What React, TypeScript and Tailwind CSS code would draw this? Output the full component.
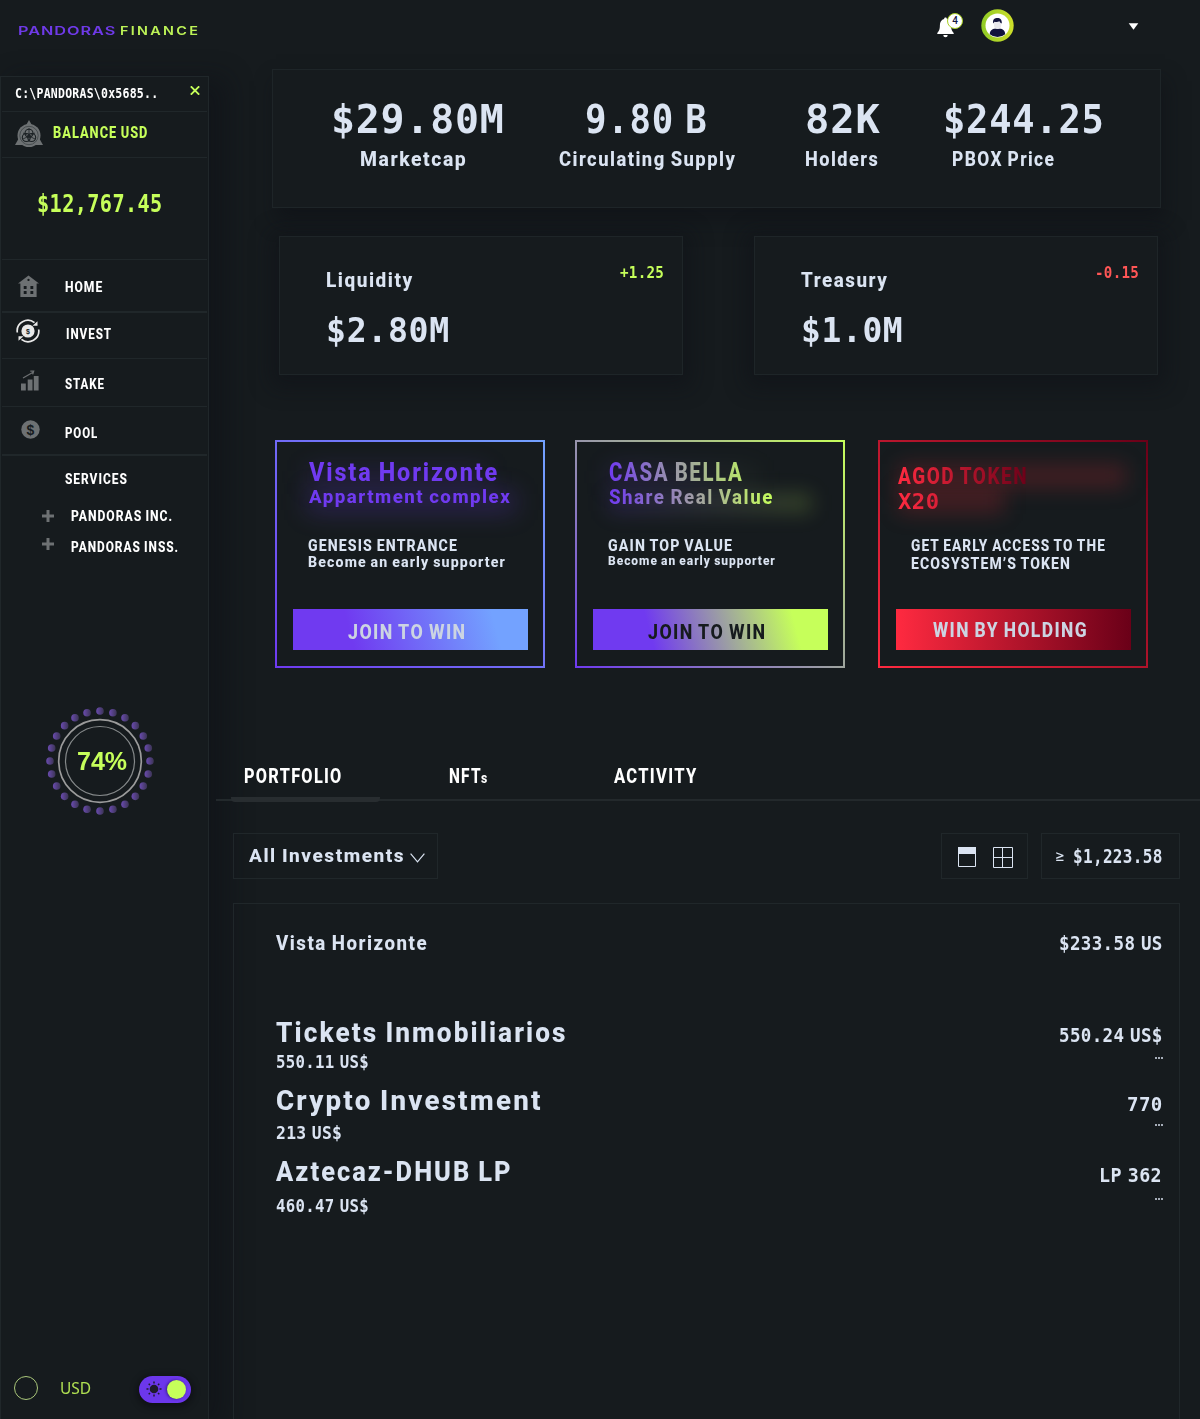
import React, { useLayoutEffect, useRef, useState } from 'react';

/** Condenses or widens one line of text so that it fills the width of its box. */
function Fit({ className = '', inner = '', children }: { className?: string; inner?: string; children: React.ReactNode }) {
  const box = useRef<HTMLSpanElement>(null);
  const line = useRef<HTMLSpanElement>(null);
  const [scale, setScale] = useState(1);
  useLayoutEffect(() => {
    if (!box.current || !line.current) return;
    const spacing = parseFloat(getComputedStyle(line.current).letterSpacing) || 0;
    setScale(box.current.clientWidth / (line.current.offsetWidth - spacing));
  }, []);
  return (
    <span ref={box} className={`block shrink-0 leading-none ${className}`}>
      <span ref={line} className={`inline-block origin-left whitespace-nowrap align-top ${inner}`} style={{ transform: `scaleX(${scale})` }}>
        {children}
      </span>
    </span>
  );
}

const SANS = "font-['Roboto',sans-serif] font-extrabold tracking-[0.08em] [word-spacing:-0.06em]";
const MONO = "font-['DejaVu_Sans_Mono',monospace] font-bold tracking-[0.02em] [word-spacing:-0.3em]";

function Label({ className = '', inner = '', children }: { className?: string; inner?: string; children: React.ReactNode }) {
  return <Fit className={`${SANS} ${className}`} inner={inner}>{children}</Fit>;
}

function Num({ className = '', inner = '', children }: { className?: string; inner?: string; children: React.ReactNode }) {
  return <Fit className={`${MONO} ${className}`} inner={inner}>{children}</Fit>;
}

function Emblem() {
  return (
    <svg className="mt-[8px] ml-[13px] h-[28px] w-[28px] shrink-0" viewBox="0 0 28 28" fill="none">
      <path d="M14 0L28 25H0Z" fill="#6d7173" />
      <circle cx="14" cy="15.500" r="11.500" fill="#6d7173" />
      <circle cx="14" cy="15.500" r="9.200" stroke="#3c4245" strokeWidth="0.800" />
      <circle cx="14" cy="13.200" r="4" stroke="#1a2023" strokeWidth="1.100" />
      <circle cx="11.300" cy="17.500" r="4" stroke="#1a2023" strokeWidth="1.100" />
      <circle cx="16.700" cy="17.500" r="4" stroke="#1a2023" strokeWidth="1.100" />
      <path d="M14 8v14M8 19l12-6M8 13l12 6" stroke="#1a2023" strokeWidth="0.800" />
    </svg>
  );
}

function HomeIcon() {
  return (
    <svg className="mt-[15px] ml-[16px] h-[22px] w-[21px] shrink-0" viewBox="0 0 22 22" preserveAspectRatio="none">
      <path fillRule="evenodd" fill="#6d7173" d="M11 0.500L22 8.500H19.500V22H2.500V8.500H0ZM11 3.700a1.200 1.200 0 1 0 .01 0ZM6 11v3h3v-3ZM13 11v3h3v-3ZM6 16v3h3v-3ZM13 16v3h3v-3Z" />
    </svg>
  );
}

function InvestIcon() {
  return (
    <svg className="mt-[6px] ml-[14px] h-[24px] w-[24px] shrink-0" viewBox="0 0 24 24" fill="none">
      <circle cx="12" cy="12" r="6.600" fill="#e9e9e9" />
      <path d="M1.300 13.500A10.700 10.700 0 0 1 18.500 3.600M22.700 10.500A10.700 10.700 0 0 1 5.500 20.400" stroke="#e9e9e9" strokeWidth="1.700" />
      <path d="M16.500 6.800h5V2.300ZM7.500 17.200H2.500V21.700Z" fill="#e9e9e9" />
      <text x="12" y="14.500" textAnchor="middle" fontSize="7" fontWeight="700" fontFamily="Liberation Sans" fill="#161b1e">$</text>
    </svg>
  );
}

function StakeIcon() {
  return (
    <svg className="mt-[11px] ml-[19px] h-[21px] w-[19px] shrink-0" viewBox="0 0 19 21">
      <path d="M0 13.500h4.800V20.500H0ZM6.700 9.500h4.800V20.500H6.700ZM12.800 6h4.800v14.500h-4.800Z" fill="#6d7173" />
      <path d="M2 8l10.500-6M9.300 1.200h3.400l-1 3.200" stroke="#6d7173" strokeWidth="1.200" fill="none" />
    </svg>
  );
}

function PoolIcon() {
  return (
    <svg className="mt-[13px] ml-[19px] h-[19px] w-[19px] shrink-0" viewBox="0 0 19 19">
      <circle cx="9.500" cy="9.500" r="9.200" fill="#6d7173" />
      <text x="9.500" y="14.500" textAnchor="middle" fontSize="14" fontFamily="Liberation Sans" fontWeight="700" fill="#161b1e">$</text>
    </svg>
  );
}

function Plus({ className }: { className: string }) {
  return (
    <svg className={`h-[12px] w-[12px] shrink-0 ${className}`} viewBox="0 0 12 12">
      <path d="M6 0v12M0 6h12" stroke="#6d7173" strokeWidth="3" />
    </svg>
  );
}

function Dial() {
  const dots = Array.from({ length: 24 }, (_, i) => (i * Math.PI) / 12);
  return (
    <div className="relative mt-[152px] ml-[45px] grid h-[108px] w-[108px] place-items-center">
      <svg className="absolute inset-0 h-[108px] w-[108px]" viewBox="-54 -54 108 108" fill="none">
        <defs>
          <linearGradient id="dot" x1="0" x2="1">
            <stop stopColor="#6a4bb0" />
            <stop offset="1" stopColor="#3b3454" />
          </linearGradient>
        </defs>
        {dots.map((a) => (
          <circle key={a} cx={50 * Math.sin(a)} cy={-50 * Math.cos(a)} r="3.800" fill="url(#dot)" />
        ))}
        <circle r="41.300" stroke="#9b9b9b" strokeWidth="1.700" />
        <circle r="34.500" stroke="#85898a" strokeWidth="1.200" />
      </svg>
      <Fit className="relative ml-[3px] w-[50px] font-['Liberation_Sans',sans-serif] text-[26px] font-bold text-[#c6ff5a]">74%</Fit>
    </div>
  );
}

function Sidebar() {
  const item = 'flex border-t border-[#20272a] mx-[1px]';
  return (
    <div className="flex h-[1343px] w-[209px] flex-col border border-b-0 border-[#20272a] text-white shadow-[14px_6px_24px_4px_rgba(14,15,22,0.45)]">
      <div className="flex h-[34px]">
        <Num className="mt-[9px] ml-[14px] w-[143px] text-[14px]">C:\PANDORAS\0x5685..</Num>
        <svg className="mt-[9px] ml-[32px] h-[9px] w-[10px]" viewBox="0 0 10 9"><path d="M.8.300L9.200 8.700M9.200.300L.8 8.700" stroke="#c6ff5a" strokeWidth="1.800" /></svg>
      </div>
      <div className={`${item} h-[46px]`}>
        <Emblem />
        <Label className="mt-[13px] ml-[10px] w-[94px] text-[16px] text-[#c6ff5a]">BALANCE USD</Label>
      </div>
      <div className={`${item} h-[102px]`}>
        <Num className="mt-[34px] ml-[35px] w-[125px] text-[24px] text-[#c6ff5a]">$12,767.45</Num>
      </div>
      <div className={`${item} h-[52px]`}>
        <HomeIcon />
        <Label className="mt-[20px] ml-[26px] w-[37px] text-[15px]">HOME</Label>
      </div>
      <div className={`${item} h-[47px] border-t-2`}>
        <InvestIcon />
        <Label className="mt-[14px] ml-[26px] w-[45px] text-[15px]">INVEST</Label>
      </div>
      <div className={`${item} h-[48px]`}>
        <StakeIcon />
        <Label className="mt-[18px] ml-[25px] w-[39px] text-[15px]">STAKE</Label>
      </div>
      <div className={`${item} h-[48px]`}>
        <PoolIcon />
        <Label className="mt-[19px] ml-[25px] w-[32px] text-[15px]">POOL</Label>
      </div>
      <div className="mx-[1px] border-t-2 border-[#20272a]">
        <Label className="mt-[16px] ml-[63px] w-[62px] text-[15px]">SERVICES</Label>
        <div className="mt-[22px] flex">
          <Plus className="mt-[1px] ml-[40px]" />
          <Label className="ml-[17px] w-[101px] text-[15px]">PANDORAS INC.</Label>
        </div>
        <div className="mt-[16px] flex">
          <Plus className="-mt-[2px] ml-[40px]" />
          <Label className="ml-[17px] w-[107px] text-[15px]">PANDORAS INSS.</Label>
        </div>
      </div>
      <Dial />
      <div className="mt-auto mb-[16px] flex h-[28px] items-center">
        <span className="-mt-[2px] ml-[13px] h-[24px] w-[24px] rounded-full border border-[#aac77a]" />
        <Fit className="-mt-[3px] ml-[22px] w-[31px] font-['Noto_Sans',sans-serif] text-[17px] text-[#b0e052]">USD</Fit>
        <span className="ml-[48px] flex h-[27px] w-[52px] items-center rounded-full bg-[#6c37ec] shadow-[0_2px_6px_2px_rgba(8,8,12,0.5)]">
          <svg className="ml-[7px] h-[16px] w-[16px]" viewBox="-8 -8 16 16">
            <circle r="4.300" fill="#1f1b2c" />
            <path d="M0-7.500V-5.500M0 5.500V7.500M-7.500 0H-5.500M5.500 0H7.500M-5.300-5.300L-4-4M4 4L5.300 5.300M-5.300 5.300L-4 4M4-4L5.300-5.300" stroke="#1f1b2c" strokeWidth="1.500" />
          </svg>
          <span className="ml-[5px] h-[19px] w-[19px] rounded-full bg-[#c6ff5a] shadow-[-1px_0_3px_rgba(20,10,60,0.6)]" />
        </span>
      </div>
    </div>
  );
}

function Header() {
  return (
    <header className="flex h-[69px] items-start">
      <div className="relative mt-[17px] ml-[721px] h-[21px] w-[17px]">
        <svg className="h-[21px] w-[17px]" viewBox="0 0 17 21" fill="#fff">
          <path d="M8.500.500c1 0 1.400.700 1.400 1.600 2.800.700 4.200 3 4.200 6 0 4.600.900 6 2.600 7.900V17H.300v-1c1.700-1.900 2.600-3.300 2.600-7.900 0-3 1.400-5.300 4.200-6C7.100 1.200 7.500.500 8.500.500ZM6.300 18h4.400a2.200 2.200 0 0 1-4.400 0Z" />
        </svg>
        <span className="absolute -top-[4px] left-[10px] grid h-[16px] w-[16px] place-items-center rounded-full border-[1.5px] border-[#a9cf22] bg-white font-['Roboto',sans-serif] text-[10px] leading-none font-medium text-[#15173f]">4</span>
      </div>
      <svg className="mt-[9px] ml-[27px] h-[33px] w-[33px]" viewBox="0 0 33 33">
        <defs>
          <linearGradient id="ring" x1="0" x2="1"><stop stopColor="#8fca26" /><stop offset="1" stopColor="#cfe02a" /></linearGradient>
        </defs>
        <circle cx="16.500" cy="16.500" r="16.200" fill="url(#ring)" />
        <circle cx="16.500" cy="16.500" r="12" fill="#fff" />
        <path d="M8.800 25.300c0-4.500 3.200-5.700 7.700-5.700s7.700 1.200 7.700 5.700a12 12 0 0 1-15.400 0Z" fill="#12143c" />
        <path d="M13 13h7.200v3.200c0 2-1.200 3.800-3.600 3.800S13 18.200 13 16.200Z" fill="#e8e8ec" />
        <path d="M12.200 14.500c-.6-3.200.8-5.300 3.300-5.400 3-.5 5.600 1 5.300 5.400-1.400-.4-2-1.200-2.300-2.200-1.600 1-3.600.8-5 .5Z" fill="#12143c" />
      </svg>
      <svg className="mt-[23px] ml-[114px] h-[7px] w-[11px]" viewBox="0 0 11 7"><path d="M.700.300h9.600L5.500 6.700Z" fill="#fff" /></svg>
    </header>
  );
}

function Stats() {
  return (
    <section className="ml-[56px] flex h-[139px] w-[889px] border border-[#1e2528] bg-[#161b1e] pt-[30px] shadow-[4px_12px_18px_rgba(14,15,22,0.5)]">
      <div className="ml-[58px] w-[173px]">
        <Num className="w-[173px] text-[39px]">$29.80M</Num>
        <Label className="mt-[10px] ml-[29px] w-[106px] text-[20px]">Marketcap</Label>
      </div>
      <div className="ml-[55px] w-[176px]">
        <Num className="ml-[26px] w-[122px] text-[39px]">9.80 B</Num>
        <Label className="mt-[10px] w-[176px] text-[20px]">Circulating Supply</Label>
      </div>
      <div className="ml-[70px] w-[75px]">
        <Num className="w-[75px] text-[39px]">82K</Num>
        <Label className="mt-[10px] w-[73px] text-[20px]">Holders</Label>
      </div>
      <div className="ml-[63px] w-[161px]">
        <Num className="w-[161px] text-[39px]">$244.25</Num>
        <Label className="mt-[10px] ml-[9px] w-[102px] text-[20px]">PBOX Price</Label>
      </div>
    </section>
  );
}

function MoneyCard({ className, title, titleW, delta, deltaClass, value, valueW }: { className: string; title: string; titleW: string; delta: string; deltaClass: string; value: string; valueW: string }) {
  return (
    <section className={`h-[139px] w-[404px] border border-[#1e2528] bg-[#161b1e] pl-[46px] shadow-[0_4px_20px_8px_rgba(14,15,22,0.45)] ${className}`}>
      <div className="flex justify-between pr-[18px]">
        <Label className={`mt-[33px] text-[20px] ${titleW}`}>{title}</Label>
        <Num className={`mt-[28px] w-[44px] text-[16px] ${deltaClass}`}>{delta}</Num>
      </div>
      <Num className={`mt-[24px] text-[33px] ${valueW}`}>{value}</Num>
    </section>
  );
}

function Promos() {
  const card = 'h-[228px] w-[270px] shrink-0 p-[2px]';
  const button = 'mx-[16px] grid h-[41px] w-[235px] place-items-center';
  return (
    <section className="mt-[65px] ml-[59px] flex">
      <div className={`${card} bg-linear-45/srgb from-[#6f3af0] to-[#73a2ff]`}>
        <div className="relative h-full bg-[#161b1e] pt-[18px]">
          <span className="absolute top-[26px] left-[30px] h-[18px] w-[180px] bg-[#6f3af0]/15 blur-[12px]" />
          <span className="absolute top-[50px] left-[30px] h-[20px] w-[208px] bg-[#6f3af0]/25 blur-[12px]" />
          <Label className="relative ml-[32px] w-[188px] text-[25px] text-[#703af0]">Vista Horizonte</Label>
          <Label className="relative mt-[2px] ml-[32px] w-[201px] text-[19px] text-[#703af0]">Appartment complex</Label>
          <Label className="mt-[31px] ml-[31px] w-[149px] text-[17px]">GENESIS ENTRANCE</Label>
          <Label className="mt-[1px] ml-[31px] w-[197px] text-[15px]">Become an early supporter</Label>
          <div className={`${button} mt-[39px] bg-[linear-gradient(75deg,#703af0_25%,#73a2ff_85%)]`}>
            <Label className="mt-[4px] -ml-[9px] w-[117px] text-[20px] text-[#ccd4e2]">JOIN TO WIN</Label>
          </div>
        </div>
      </div>
      <div className={`${card} ml-[30px] bg-linear-45/srgb from-[#6f3af0] to-[#c6ff5a]`}>
        <div className="relative h-full bg-[#161b1e] pt-[18px]">
          <span className="absolute top-[26px] left-[32px] h-[18px] w-[150px] bg-linear-to-r/srgb from-[#6f3af0]/20 to-[#c6ff5a]/5 blur-[12px]" />
          <span className="absolute top-[52px] left-[32px] h-[18px] w-[202px] bg-linear-to-r/srgb from-[#6f3af0]/20 to-[#c6ff5a]/20 blur-[10px]" />
          <Label className="relative ml-[32px] w-[133px] text-[25px] text-transparent" inner="bg-linear-to-r/srgb from-[#703af0] via-[#9c9aa6] to-[#b9e66a] bg-clip-text">CASA BELLA</Label>
          <Label className="relative mt-[2px] ml-[32px] w-[163px] text-[20px] text-transparent" inner="bg-linear-to-r/srgb from-[#703af0] via-[#9f9aa8] to-[#c6ff5a] bg-clip-text">Share Real Value</Label>
          <Label className="mt-[30px] ml-[31px] w-[124px] text-[17px]">GAIN TOP VALUE</Label>
          <Label className="ml-[31px] w-[167px] text-[13px]">Become an early supporter</Label>
          <div className={`${button} mt-[42px] bg-[linear-gradient(75deg,#703af0_25%,#c6ff5a_85%)]`}>
            <Label className="mt-[4px] -ml-[9px] w-[117px] text-[20px] text-[#161b1e]">JOIN TO WIN</Label>
          </div>
        </div>
      </div>
      <div className={`${card} ml-[33px] bg-linear-45/srgb from-[#ff2a40] to-[#6a0018]`}>
        <div className="relative h-full bg-[#161b1e] pt-[23px]">
          <span className="absolute top-[22px] left-[18px] h-[24px] w-[228px] bg-[#c5282f]/25 blur-[10px]" />
          <span className="absolute top-[46px] left-[18px] h-[26px] w-[106px] bg-[#c5282f]/25 blur-[10px]" />
          <Label className="relative ml-[18px] w-[129px] text-[23px] text-transparent" inner="bg-linear-to-r/srgb from-[#ff2a40] to-[#6a0018] bg-clip-text">AGOD TOKEN</Label>
          <Num className="relative mt-[3px] ml-[18px] w-[41px] text-[22px] text-transparent" inner="bg-linear-to-r/srgb from-[#ff2a40] to-[#d81f37] bg-clip-text">X20</Num>
          <Label className="mt-[24px] ml-[31px] w-[194px] text-[17px]">GET EARLY ACCESS TO THE</Label>
          <Label className="mt-[1px] ml-[31px] w-[159px] text-[17px]">ECOSYSTEM’S TOKEN</Label>
          <div className={`${button} mt-[37px] bg-linear-to-r/srgb from-[#ff2a40] to-[#6a0018]`}>
            <Label className="mt-[1px] -ml-[8px] w-[154px] text-[20px] text-[#ccd4e2]">WIN BY HOLDING</Label>
          </div>
        </div>
      </div>
    </section>
  );
}

function Toolbar() {
  const box = 'flex h-[46px] items-center border border-[#20272a]';
  return (
    <div className="mt-[32px] ml-[17px] flex w-[947px]">
      <div className={`${box} w-[205px] pb-[2px] pl-[15px]`}>
        <Label className="w-[155px] text-[19px]">All Investments</Label>
        <svg className="mt-[5px] ml-[6px] h-[10px] w-[15px]" viewBox="0 0 15 10" fill="none"><path d="M.600.600L7.500 8.800L14.400.600" stroke="#dbe4f2" strokeWidth="1.200" /></svg>
      </div>
      <div className={`${box} ml-auto w-[87px] pl-[16px]`}>
        <svg className="mt-[1px] h-[20px] w-[18px]" viewBox="0 0 18 20"><path d="M0 0h18v7H0Z" fill="#dbe4f2" /><path d="M.500.500h17v19H.500Z" fill="none" stroke="#dbe4f2" /></svg>
        <svg className="mt-[2px] ml-[17px] h-[21px] w-[20px]" viewBox="0 0 20 21" fill="none" stroke="#dbe4f2"><path d="M.500.500h19v20H.500ZM9.500.500v20M.500 10.500h19" /></svg>
      </div>
      <div className={`${box} ml-[13px] w-[139px] pl-[13px]`}>
        <Fit className="w-[10px] font-['DejaVu_Sans',sans-serif] text-[15px]">≥</Fit>
        <Num className="ml-[8px] w-[89px] text-[19px]">$1,223.58</Num>
      </div>
    </div>
  );
}

function Dots({ className }: { className: string }) {
  return (
    <span className={`-mr-[1px] flex gap-[1px] ${className}`}>
      <i className="h-[2px] w-[2px] bg-[#a5adb8]" />
      <i className="h-[2px] w-[2px] bg-[#a5adb8]" />
      <i className="h-[2px] w-[2px] bg-[#a5adb8]" />
    </span>
  );
}

function Holdings() {
  return (
    <section className="mt-[24px] ml-[17px] flex h-[517px] w-[947px] justify-between border border-b-0 border-[#20272a] pr-[17px] pl-[42px]">
      <div>
        <Label className="mt-[29px] w-[151px] text-[20px]">Vista Horizonte</Label>
        <Label className="mt-[66px] w-[290px] text-[28px]">Tickets Inmobiliarios</Label>
        <Num className="mt-[7px] w-[93px] text-[17px]">550.11 US$</Num>
        <Label className="mt-[16px] w-[264px] text-[28px]">Crypto Investment</Label>
        <Num className="mt-[10px] w-[66px] text-[17px]">213 US$</Num>
        <Label className="mt-[16px] w-[234px] text-[28px]">Aztecaz-DHUB LP</Label>
        <Num className="mt-[12px] w-[93px] text-[17px]">460.47 US$</Num>
      </div>
      <div className="flex flex-col items-end">
        <Num className="mt-[29px] w-[103px] text-[20px]">$233.58 US</Num>
        <Num className="mt-[72px] w-[103px] text-[20px]">550.24 US$</Num>
        <Dots className="mt-[12px]" />
        <Num className="mt-[35px] w-[35px] text-[20px]">770</Num>
        <Dots className="mt-[10px]" />
        <Num className="mt-[39px] w-[63px] text-[20px]">LP 362</Num>
        <Dots className="mt-[13px]" />
      </div>
    </section>
  );
}

export default function App() {
  return (
    <div className="flex h-[1419px] w-[1200px] overflow-hidden bg-[#161b1e] text-[#dbe4f2]">
      <aside className="w-[216px] shrink-0">
        <div className="flex h-[76px] pt-[25px] pl-[18px] font-['Inter',sans-serif]">
          <Fit className="w-[98px] text-[12px] font-semibold tracking-[0.06em] text-[#6f3ae8]">PANDORAS</Fit>
          <Fit className="ml-[4px] w-[78px] text-[12px] font-semibold tracking-[0.16em] text-[#bdf357]">FINANCE</Fit>
        </div>
        <Sidebar />
      </aside>
      <main className="w-[984px] shrink-0">
        <Header />
        <Stats />
        <div className="mt-[28px] ml-[63px] flex">
          <MoneyCard className="" title="Liquidity" titleW="w-[86px]" delta="+1.25" deltaClass="text-[#c6ff5a]" value="$2.80M" valueW="w-[123px]" />
          <MoneyCard className="ml-[71px]" title="Treasury" titleW="w-[86px]" delta="-0.15" deltaClass="text-[#ff5656]" value="$1.0M" valueW="w-[102px]" />
        </div>
        <Promos />
        <nav className="mt-[98px] flex h-[35px] border-b-2 border-[#23292c] text-white">
          <div className="ml-[15px] h-[36px] w-[149px] shrink-0 rounded-sm border-b-[5px] border-[#282d30]">
            <Label className="ml-[13px] w-[97px] text-[20px]">PORTFOLIO</Label>
          </div>
          <div className="ml-[69px] flex w-[38px]">
            <Label className="w-[32px] text-[20px]">NFT</Label>
            <Label className="mt-[5px] w-[6px] text-[14px]">s</Label>
          </div>
          <Label className="ml-[127px] w-[82px] text-[20px]">ACTIVITY</Label>
        </nav>
        <Toolbar />
        <Holdings />
      </main>
    </div>
  );
}
